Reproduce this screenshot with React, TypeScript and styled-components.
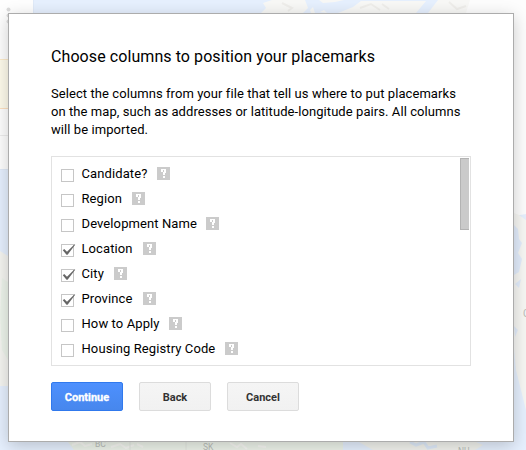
import React, { useState } from "react";
import styled, { createGlobalStyle } from "styled-components";

const GlobalStyle = createGlobalStyle`
  *, *::before, *::after { box-sizing: border-box; }
  body { margin: 0; overflow: hidden; font-family: Roboto, "Liberation Sans", sans-serif; color: #000; }
`;

const Page = styled.div`
  position: relative;
  width: 526px;
  height: 450px;
  padding: 13px 12px 8px 8px;
  overflow: hidden;
  background: #e6f0fe;
`;

const MapBackdrop = styled.svg`
  position: absolute;
  inset: 0;
`;

const LayersPanel = styled.div`
  position: absolute;
  top: 0;
  left: 0;
  width: 33px;
  height: 169px;
  padding-top: 59px;
  background: #fefefe;
  box-shadow: 0 0 1px rgba(0, 0, 0, 0.15);
`;

const ActiveLayer = styled.div`
  height: 50px;
  background: #fefbec;
  border-top: 1px solid #fdebca;
  border-bottom: 1px solid #fde0c0;
`;

const LayerRow = styled.div`
  height: 27px;
  border-bottom: 1px solid #ededed;
`;

const Dialog = styled.section`
  position: relative;
  width: 506px;
  height: 429px;
  padding: 33px 42px 30px;
  background: #fff;
  border: 1px solid #acacac;
  box-shadow: 0 4px 16px rgba(0, 0, 0, 0.2);
`;

const Title = styled.h1`
  margin: 0;
  font-size: 16px;
  font-weight: 400;
  line-height: 20px;
  letter-spacing: 0.08px;
  white-space: nowrap;
`;

const Description = styled.p`
  margin: 18px 0 0;
  font-size: 13px;
  line-height: 18px;
  letter-spacing: 0.075px;
  white-space: nowrap;
`;

const ColumnList = styled.div`
  display: flex;
  justify-content: space-between;
  width: 420px;
  height: 210px;
  margin-top: 17px;
  padding: 1px 1px 0 9px;
  border: 1px solid #e2e2e2;
`;

const Rows = styled.div`
  padding-top: 3px;
`;

const Row = styled.label`
  display: flex;
  align-items: center;
  height: 25px;
`;

const Checkbox = styled.span`
  width: 13px;
  height: 13px;
  margin-top: 4px;
  border: 1px solid #c6c6c6;
`;

const HiddenInput = styled.input`
  position: absolute;
  opacity: 0;
  pointer-events: none;
`;

const CheckMark = styled.svg`
  display: block;
  overflow: visible;
`;

const Label = styled.span<{ $width: number }>`
  width: ${(p) => p.$width}px;
  padding-left: 0.5px;
  margin-left: 7px;
  font-size: 13px;
  line-height: 18px;
  letter-spacing: 0.1px;
  white-space: nowrap;
`;

const HelpIcon = styled.svg`
  display: block;
`;

const ScrollThumb = styled.div`
  width: 9px;
  height: 72px;
  background: #cacaca;
  border: 1px solid #b3b3b3;
  border-right: 0;
`;

const Actions = styled.div`
  display: flex;
  gap: 16px;
  margin-top: 16px;
`;

const Button = styled.button<{ $primary?: boolean }>`
  width: 72px;
  height: 29px;
  padding: 1px 0 0;
  font: 700 11px/27px Roboto, "Liberation Sans", sans-serif;
  -webkit-text-stroke: ${(p) => (p.$primary ? "0.3px #fff" : "0")};
  color: ${(p) => (p.$primary ? "#fff" : "#333")};
  background: ${(p) => (p.$primary ? "linear-gradient(#4d90fe, #4787ed)" : "linear-gradient(#f5f5f5, #f1f1f1)")};
  border: 1px solid ${(p) => (p.$primary ? "#3079ed" : "#dcdcdc")};
  border-radius: 2px;
`;

const columns = [
  { name: "Candidate?", width: 76, checked: false },
  { name: "Region", width: 51, checked: false },
  { name: "Development Name", width: 125, checked: false },
  { name: "Location", width: 62, checked: true },
  { name: "City", width: 33, checked: true },
  { name: "Province", width: 62, checked: true },
  { name: "How to Apply", width: 88, checked: false },
  { name: "Housing Registry Code", width: 144, checked: false },
];

function Help() {
  return (
    <HelpIcon width="13" height="13" viewBox="0 0 13 13" shapeRendering="crispEdges">
      <rect width="13" height="13" rx="1" fill="#cbcbcb" />
      <path d="M4 2h5v1H4zM4 3h2v2H4zM7 3h2v3H7zM6 5h2v2H6zM6 7h2v1H6zM6 9h2v2H6z" fill="#fff" />
    </HelpIcon>
  );
}

function ColumnRow({ name, width, checked }: { name: string; width: number; checked: boolean }) {
  const [on, setOn] = useState(checked);
  return (
    <Row>
      <HiddenInput type="checkbox" checked={on} onChange={() => setOn(!on)} />
      <Checkbox>
        {on && (
          <CheckMark width="13" height="11" viewBox="0 0 13 11">
            <path d="M0.8 5.2 2.2 4.1 5 6.8 12.6-.8 13.2-.3 5.6 9.8 4.5 9.8Z" fill="#666" />
          </CheckMark>
        )}
      </Checkbox>
      <Label $width={width}>{name}</Label>
      <Help />
    </Row>
  );
}

function MapArt() {
  return (
    <MapBackdrop width="526" height="450" viewBox="0 0 526 450">
      <path d="M261 13 266 8 263 3 272 0H305L308 8 303 13ZM310 10l3-3 2 6h-4ZM319 0l4 3 12-1 9-2ZM320 12l4-2 3 3ZM338 13l15-6 8-6H426L416 13ZM428 13 438 0H526V200L522 208 514 212V13Z" fill="#f8f8f6" />
      <path d="M282 3l10 5-4 3M360 8l11-4 9 6M449 2l8 7 9-3M382 4l7 5" fill="none" stroke="#efeeeb" strokeWidth="2" />
      <path d="M470 0H526V214L514 216V13H466Z" fill="#fdfdfd" />
      <path d="M514 213l5 2 7 5V410L521 390 516 370 514 349Z" fill="#f7f7f4" />
      <path d="M514 225l4 4 1 10 3 4-4 10 4 6-3 13-5 3ZM515 284l6-5-2 9ZM514 326l4 4-3 7Z" fill="#e3edfc" />
      <path d="M0 251 8 256V386H0Z" fill="#f5f5f1" />
      <path d="M2 278 8 282V360L2 350 0 315Z" fill="#edf4eb" />
      <path d="M68 442H343V450H74Z" fill="#edf3ea" />
      <path d="M359 442H476L483 445 475 450H373Z" fill="#f2f3ee" />
      <path d="M72 445l8-3 5 4 7-2M111 447l9-3 6 4 8-3M137 444l6 3M230 443l7 4 4-3 6 5M258 446l8 1" fill="none" stroke="#f7f7f3" strokeWidth="2" />
      <path d="M130 442v8M186 442v8" stroke="#e2e6df" />
      <path d="M410 442l6 3 8-3 4 6 9-2" fill="none" stroke="#dfebfa" strokeWidth="3" />
      <g fill="#b9bdb9" fontFamily="Roboto, sans-serif" fontSize="8.5">
        <text x="95" y="447">BC</text>
        <text x="203" y="450">SK</text>
        <text x="458" y="454">NU</text>
        <text x="523" y="317" fontSize="10">C</text>
      </g>
    </MapBackdrop>
  );
}

const MenuDots = styled.svg`
  position: absolute;
  top: 7px;
  left: 6px;
`;

export default function App() {
  return (
    <Page>
      <GlobalStyle />
      <MapArt />
      <LayersPanel>
        <MenuDots width="5" height="18" fill="#dcdcdc">
          <circle cx="2.5" cy="2.5" r="2" />
          <circle cx="2.5" cy="8.5" r="2" />
          <circle cx="2.5" cy="14.5" r="2" />
        </MenuDots>
        <ActiveLayer />
        <LayerRow />
      </LayersPanel>
      <Dialog role="dialog">
        <Title>Choose columns to position your placemarks</Title>
        <Description>
          Select the columns from your file that tell us where to put placemarks
          <br />
          on the map, such as addresses or latitude-longitude pairs. All columns
          <br />
          will be imported.
        </Description>
        <ColumnList>
          <Rows>
            {columns.map((c) => (
              <ColumnRow key={c.name} {...c} />
            ))}
          </Rows>
          <ScrollThumb />
        </ColumnList>
        <Actions>
          <Button $primary>Continue</Button>
          <Button>Back</Button>
          <Button>Cancel</Button>
        </Actions>
      </Dialog>
    </Page>
  );
}
